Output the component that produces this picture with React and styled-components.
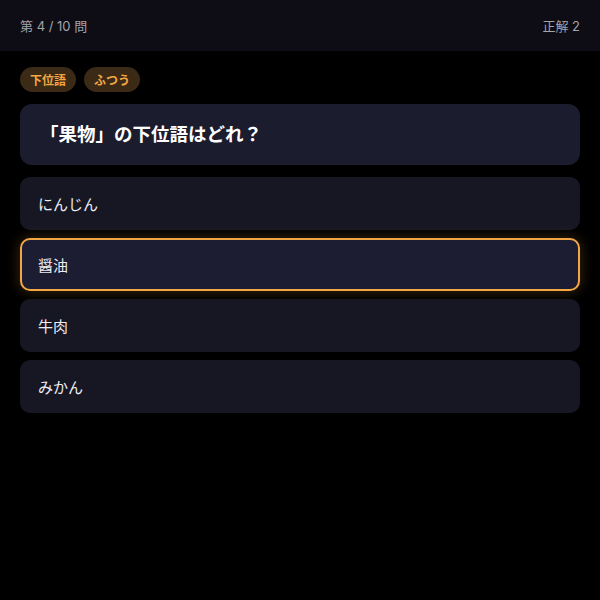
import React, { useState } from "react";
import styled, { createGlobalStyle } from "styled-components";

const GlobalStyle = createGlobalStyle`
    html, body {
        margin: 0;
        padding: 0;
        background: #000;
        font-family: Inter, "Noto Sans CJK JP", sans-serif;
    }
`;

const OPTIONS = ["にんじん", "醤油", "牛肉", "みかん"];

const App = () => {
    const [selected, setSelected] = useState(1);

    return (
        <Page>
            <GlobalStyle />
            {/* Progress header */}
            <Header>
                <HeaderText>第 4 / 10 問</HeaderText>
                <HeaderText>正解 2</HeaderText>
            </Header>

            <Body>
                <Tags>
                    <Tag>下位語</Tag>
                    <Tag>ふつう</Tag>
                </Tags>

                <QuestionCard>「果物」の下位語はどれ？</QuestionCard>

                <Options>
                    {OPTIONS.map((opt, i) => (
                        <Option
                            key={opt}
                            $active={i === selected}
                            onClick={() => setSelected(i)}
                        >
                            {opt}
                        </Option>
                    ))}
                </Options>
            </Body>
        </Page>
    );
};

export default App;

const Page = styled.div`
    width: 600px;
    min-height: 600px;
    background: #000;
`;

const Header = styled.div`
    height: 51px;
    box-sizing: border-box;
    padding: 0 20px;
    display: flex;
    justify-content: space-between;
    align-items: center;
    background: #0e0d15;
`;

const HeaderText = styled.span`
    font-size: 13px;
    color: #a3a3ab;
`;

const Body = styled.div`
    padding: 16px 20px;
    display: flex;
    flex-direction: column;
`;

const Tags = styled.div`
    display: flex;
    gap: 8px;
    margin-bottom: 12px;
`;

const Tag = styled.span`
    height: 25px;
    box-sizing: border-box;
    padding: 0 10px;
    display: flex;
    align-items: center;
    border-radius: 13px;
    background: #3b2a15;
    color: #f2a744;
    font-size: 12px;
    font-weight: 600;
`;

const QuestionCard = styled.div`
    height: 61px;
    box-sizing: border-box;
    padding: 0 20px 4px;
    display: flex;
    align-items: center;
    border-radius: 12px;
    background: #1c1c2f;
    color: #fff;
    font-size: 18.5px;
    font-weight: 600;
    margin-bottom: 12px;
`;

const Options = styled.div`
    display: flex;
    flex-direction: column;
    gap: 8px;
`;

const Option = styled.div`
    height: 53px;
    box-sizing: border-box;
    padding: 0 16px;
    display: flex;
    align-items: center;
    border-radius: 10px;
    background: ${(p) => (p.$active ? "#1c1c32" : "#171723")};
    border: 2px solid ${(p) => (p.$active ? "#f2a744" : "transparent")};
    box-shadow: ${(p) => (p.$active ? "0 0 14px rgba(242, 167, 68, 0.25)" : "none")};
    color: #ececf2;
    font-size: 15px;
    cursor: pointer;
`;
